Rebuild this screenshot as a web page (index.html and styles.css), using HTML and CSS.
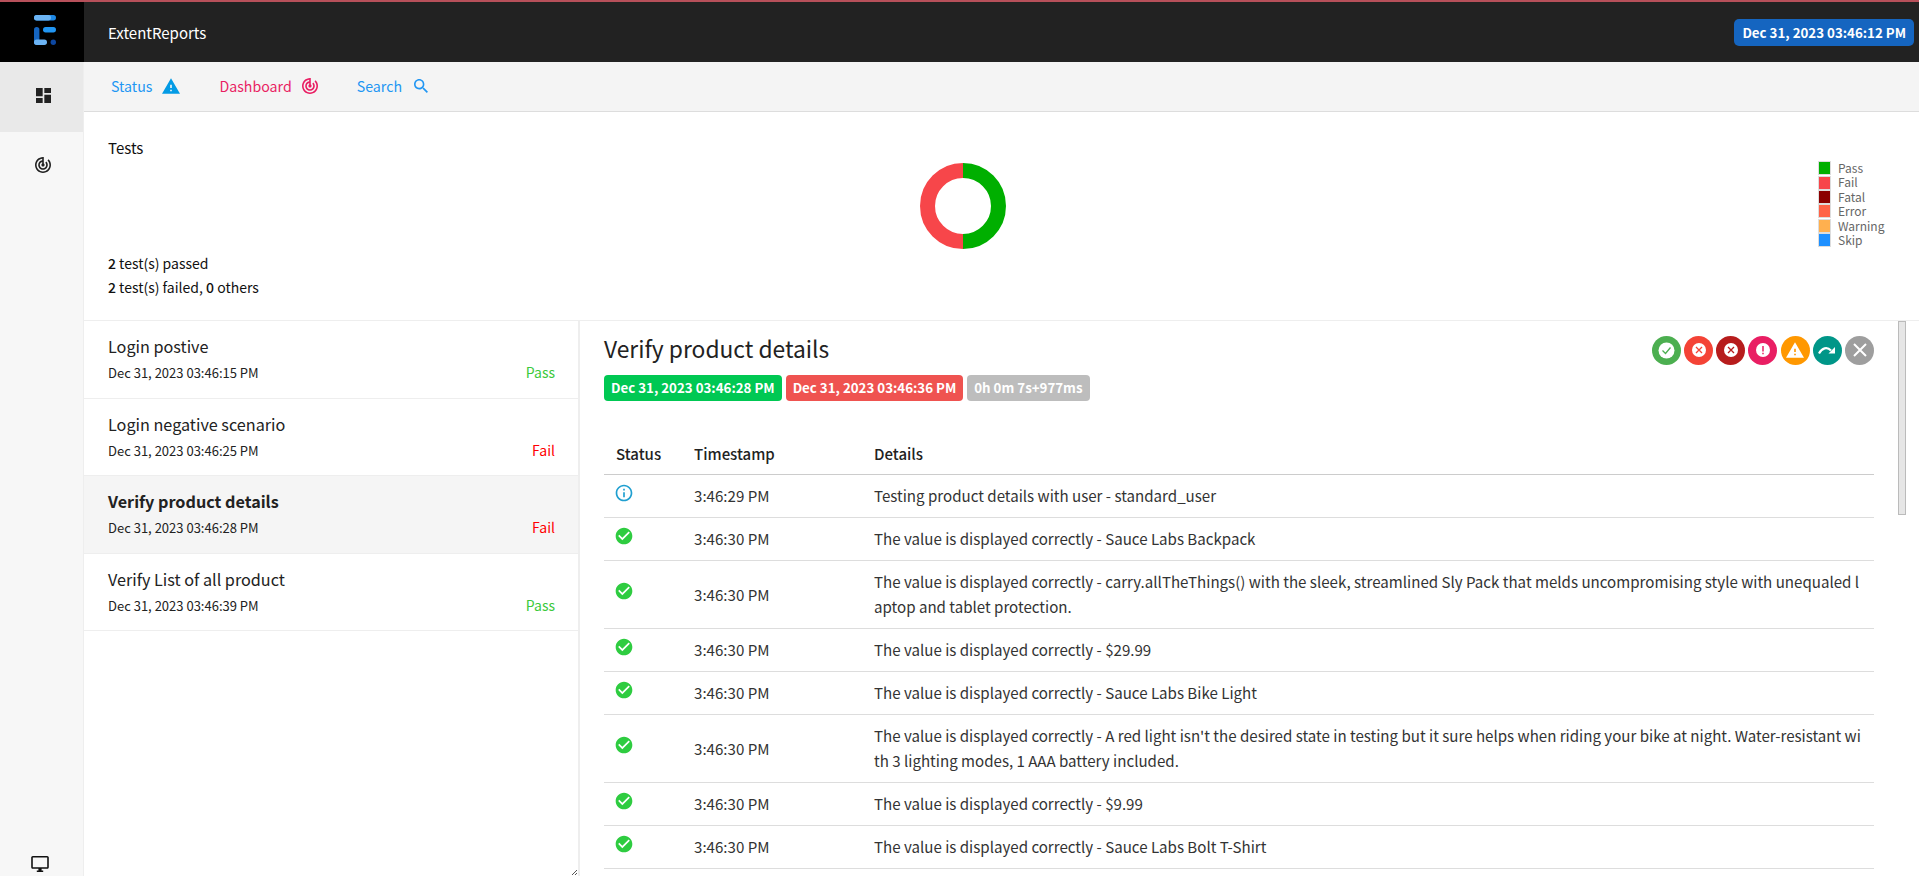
FILE: index.html
```html
<!DOCTYPE html>
<html lang="en">
<head>
  <meta charset="UTF-8">
  <title>ExtentReports</title>
  <link rel="stylesheet" href="styles.css">
</head>
<body>
  <header class="topbar">
    <div class="logo">
      <svg width="24" height="32" viewBox="0 0 24 32">
        <rect x="1" y="1" width="22" height="5.4" rx="2.7" fill="#1e88e5"/>
        <rect x="1" y="1" width="17" height="5.4" rx="2.7" fill="#6cb4f4"/>
        <rect x="10" y="13" width="13" height="5.4" rx="2.7" fill="#2196f3"/>
        <rect x="1" y="13" width="5.4" height="18" rx="2.7" fill="#1565c0"/>
        <rect x="1" y="25.6" width="13" height="5.4" rx="2.7" fill="#6cb4f4"/>
        <circle cx="20.3" cy="28.3" r="2.7" fill="#0d47a1"/>
      </svg>
    </div>
    <div class="brand">ExtentReports</div>
    <div class="started">Dec 31, 2023 03:46:12 PM</div>
  </header>

  <div class="shell">
    <aside class="sidenav">
      <a class="side-item active">
        <svg width="15" height="15" viewBox="3 3 18 18"><path d="M3 13h8V3H3v10zm0 8h8v-6H3v6zm10 0h8V11h-8v10zm0-18v6h8V3h-8z" fill="#222"/></svg>
      </a>
      <a class="side-item">
        <svg width="16" height="16" viewBox="2 2 20 20"><path d="M19.07 4.93l-1.41 1.41C19.1 7.79 20 9.79 20 12c0 4.42-3.58 8-8 8s-8-3.58-8-8c0-4.08 3.05-7.44 7-7.93v2.02C8.16 6.57 6 9.03 6 12c0 3.31 2.69 6 6 6s6-2.69 6-6c0-1.66-.67-3.16-1.76-4.24l-1.41 1.41C15.55 9.9 16 10.9 16 12c0 2.21-1.79 4-4 4s-4-1.79-4-4c0-1.86 1.28-3.41 3-3.86v2.14c-.6.35-1 .98-1 1.72 0 1.1.9 2 2 2s2-.9 2-2c0-.74-.4-1.38-1-1.72V2h-1C6.48 2 2 6.48 2 12s4.48 10 10 10 10-4.48 10-10c0-2.76-1.12-5.26-2.93-7.07z" fill="#222"/></svg>
      </a>
      <a class="side-item monitor">
        <svg width="18" height="16" viewBox="1 2 22 20"><path d="M21 2H3c-1.1 0-2 .9-2 2v12c0 1.1.9 2 2 2h7v2H8v2h8v-2h-2v-2h7c1.1 0 2-.9 2-2V4c0-1.1-.9-2-2-2zm0 14H3V4h18v12z" fill="#111"/></svg>
      </a>
    </aside>

    <div class="content">
      <nav class="subnav">
        <a class="tab tab-status">Status
          <svg width="18" height="16" viewBox="1 2 22 19"><path d="M1 21h22L12 2 1 21zm12-3h-2v-2h2v2zm0-4h-2v-4h2v4z" fill="#039be5"/></svg>
        </a>
        <a class="tab tab-dash">Dashboard
          <svg width="16" height="16" viewBox="2 2 20 20"><path d="M19.07 4.93l-1.41 1.41C19.1 7.79 20 9.79 20 12c0 4.42-3.58 8-8 8s-8-3.58-8-8c0-4.08 3.05-7.44 7-7.93v2.02C8.16 6.57 6 9.03 6 12c0 3.31 2.69 6 6 6s6-2.69 6-6c0-1.66-.67-3.16-1.76-4.24l-1.41 1.41C15.55 9.9 16 10.9 16 12c0 2.21-1.79 4-4 4s-4-1.79-4-4c0-1.86 1.28-3.41 3-3.86v2.14c-.6.35-1 .98-1 1.72 0 1.1.9 2 2 2s2-.9 2-2c0-.74-.4-1.38-1-1.72V2h-1C6.48 2 2 6.48 2 12s4.48 10 10 10 10-4.48 10-10c0-2.76-1.12-5.26-2.93-7.07z" fill="#e91e63"/></svg>
        </a>
        <a class="tab tab-search">Search
          <svg width="14" height="14" viewBox="3 3 17.5 17.5"><path d="M15.5 14h-.79l-.28-.27C15.41 12.59 16 11.11 16 9.5 16 5.91 13.09 3 9.5 3S3 5.91 3 9.5 5.91 16 9.5 16c1.61 0 3.09-.59 4.23-1.57l.27.28v.79l5 4.99L20.49 19l-4.99-5zm-6 0C7.01 14 5 11.99 5 9.5S7.01 5 9.5 5 14 7.01 14 9.5 11.99 14 9.5 14z" fill="#2196f3"/></svg>
        </a>
      </nav>

      <section class="summary">
        <div class="summary-text">
          <div class="summary-title">Tests</div>
          <div class="summary-counts">
            <div><b>2</b> test(s) passed</div>
            <div><b>2</b> test(s) failed, <b>0</b> others</div>
          </div>
        </div>
        <div class="donut">
          <svg width="86" height="86" viewBox="0 0 86 86">
            <path d="M43 7.5a35.500 35.500 0 0 1 0 71" fill="none" stroke="#00af00" stroke-width="15"/>
            <path d="M43 78.500a35.500 35.500 0 0 1 0-71" fill="none" stroke="#f7464a" stroke-width="15"/>
          </svg>
        </div>
        <ul class="legend">
          <li><i class="c-pass"></i>Pass</li>
          <li><i class="c-fail"></i>Fail</li>
          <li><i class="c-fatal"></i>Fatal</li>
          <li><i class="c-error"></i>Error</li>
          <li><i class="c-warning"></i>Warning</li>
          <li><i class="c-skip"></i>Skip</li>
        </ul>
      </section>

      <div class="split">
        <ul class="test-list">
          <li class="test">
            <div class="test-name">Login postive</div>
            <div class="test-meta"><span>Dec 31, 2023 03:46:15 PM</span><span class="pass">Pass</span></div>
          </li>
          <li class="test">
            <div class="test-name">Login negative scenario</div>
            <div class="test-meta"><span>Dec 31, 2023 03:46:25 PM</span><span class="fail">Fail</span></div>
          </li>
          <li class="test selected">
            <div class="test-name">Verify product details</div>
            <div class="test-meta"><span>Dec 31, 2023 03:46:28 PM</span><span class="fail">Fail</span></div>
          </li>
          <li class="test">
            <div class="test-name">Verify List of all product</div>
            <div class="test-meta"><span>Dec 31, 2023 03:46:39 PM</span><span class="pass">Pass</span></div>
          </li>
          <svg class="resize-mark" width="6" height="6" viewBox="0 0 6 6"><path d="M5 0L0 5M5 3L3 5" stroke="#555" stroke-width="1"/></svg>
        </ul>

        <main class="detail">
          <div class="detail-head">
            <h2>Verify product details</h2>
            <div class="filters">
              <span class="dot d-pass"><svg width="17" height="17" viewBox="0 0 17 17"><circle cx="8.500" cy="8.500" r="8" fill="#fff"/><path d="M4.500 8.500l3 3 5-6" fill="none" stroke="#4caf50" stroke-width="1.300"/></svg></span>
              <span class="dot d-fail"><svg width="14" height="14" viewBox="0 0 14 14"><circle cx="7" cy="7" r="7" fill="#fff"/><path d="M4 4l6 6M10 4l-6 6" stroke="#f44336" stroke-width="1.300"/></svg></span>
              <span class="dot d-fatal"><svg width="14" height="14" viewBox="0 0 14 14"><circle cx="7" cy="7" r="7" fill="#fff"/><path d="M4 4l6 6M10 4l-6 6" stroke="#b71c1c" stroke-width="1.300"/></svg></span>
              <span class="dot d-error"><svg width="14" height="14" viewBox="0 0 14 14"><circle cx="7" cy="7" r="7" fill="#fff"/><path d="M7 3v5.500M7 9.800v1.500" stroke="#e91e63" stroke-width="1.500"/></svg></span>
              <span class="dot d-warn"><svg width="18" height="16" viewBox="1 2 22 19"><path d="M1 21h22L12 2 1 21zm12-3h-2v-2h2v2zm0-4h-2v-4h2v4z" fill="#fff"/></svg></span>
              <span class="dot d-skip"><svg width="18" height="10" viewBox="0 0 18 10"><path d="M1 8.500C4 3 9 1.500 13 5.500" fill="none" stroke="#fff" stroke-width="2.200"/><path d="M17 8.500h-6.500L17 2z" fill="#fff"/></svg></span>
              <span class="dot d-clear"><svg width="14" height="14" viewBox="0 0 14 14"><path d="M1 1l12 12M13 1L1 13" stroke="#fff" stroke-width="2"/></svg></span>
            </div>
          </div>
          <div class="badges">
            <span class="badge b-start">Dec 31, 2023 03:46:28 PM</span>
            <span class="badge b-end">Dec 31, 2023 03:46:36 PM</span>
            <span class="badge b-time">0h 0m 7s+977ms</span>
          </div>

          <table class="log">
            <thead>
              <tr><th class="col-status">Status</th><th class="col-time">Timestamp</th><th>Details</th></tr>
            </thead>
            <tbody>
              <tr><td><svg class="ico" viewBox="0 0 24 24"><path d="M11 7h2v2h-2zm0 4h2v6h-2zm1-9C6.48 2 2 6.48 2 12s4.48 10 10 10 10-4.48 10-10S17.520 2 12 2zm0 18c-4.41 0-8-3.59-8-8s3.59-8 8-8 8 3.59 8 8-3.59 8-8 8z" fill="#1f9fd0"/></svg></td><td>3:46:29 PM</td><td>Testing product details with user - standard_user</td></tr>
              <tr><td><svg class="ico" viewBox="0 0 24 24"><use href="#ok"/></svg></td><td>3:46:30 PM</td><td>The value is displayed correctly - Sauce Labs Backpack</td></tr>
              <tr><td><svg class="ico" viewBox="0 0 24 24"><use href="#ok"/></svg></td><td>3:46:30 PM</td><td>The value is displayed correctly - carry.allTheThings() with the sleek, streamlined Sly Pack that melds uncompromising style with unequaled laptop and tablet protection.</td></tr>
              <tr><td><svg class="ico" viewBox="0 0 24 24"><use href="#ok"/></svg></td><td>3:46:30 PM</td><td>The value is displayed correctly - $29.99</td></tr>
              <tr><td><svg class="ico" viewBox="0 0 24 24"><use href="#ok"/></svg></td><td>3:46:30 PM</td><td>The value is displayed correctly - Sauce Labs Bike Light</td></tr>
              <tr><td><svg class="ico" viewBox="0 0 24 24"><use href="#ok"/></svg></td><td>3:46:30 PM</td><td>The value is displayed correctly - A red light isn't the desired state in testing but it sure helps when riding your bike at night. Water-resistant with 3 lighting modes, 1 AAA battery included.</td></tr>
              <tr><td><svg class="ico" viewBox="0 0 24 24"><use href="#ok"/></svg></td><td>3:46:30 PM</td><td>The value is displayed correctly - $9.99</td></tr>
              <tr><td><svg class="ico" viewBox="0 0 24 24"><use href="#ok"/></svg></td><td>3:46:30 PM</td><td>The value is displayed correctly - Sauce Labs Bolt T-Shirt</td></tr>
            </tbody>
          </table>
          <div class="scroll-thumb"></div>
        </main>
      </div>
    </div>
  </div>

  <svg width="0" height="0" class="defs">
    <defs>
      <path id="ok" d="M12 2C6.48 2 2 6.48 2 12s4.48 10 10 10 10-4.48 10-10S17.520 2 12 2zm-2 15l-5-5 1.410-1.410L10 14.170l7.590-7.590L19 8l-9 9z" fill="#2ecc40"/>
    </defs>
  </svg>
</body>
</html>
```

FILE: styles.css
```css
* {
  box-sizing: border-box;
}

html, body {
  height: 100%;
}

body {
  margin: 0;
  overflow: hidden;
  background: #fff;
  color: #222;
  font-family: "Noto Sans CJK SC", "Noto Sans", sans-serif;
  font-size: 15px;
}

ul {
  list-style: none;
  margin: 0;
  padding: 0;
}

.defs {
  position: absolute;
}

/* top bar */
.topbar {
  display: flex;
  align-items: center;
  height: 62px;
  background: #222;
  border-top: 2px solid #b7505a;
}

.logo {
  display: flex;
  align-items: center;
  justify-content: center;
  width: 84px;
  height: 100%;
  padding: 0 0 4px 6px;
  background: #000;
}

.brand {
  flex: 1;
  padding-left: 24px;
  color: #fff;
  font-size: 15px;
}

.started {
  margin-right: 5px;
  padding: 0 8px;
  height: 27px;
  line-height: 27px;
  border-radius: 5px;
  background: #1565c0;
  color: #fff;
  font-size: 13.3px;
  font-weight: 700;
}

.shell {
  display: flex;
  height: 814px;
}

/* left icons */
.sidenav {
  display: flex;
  flex-direction: column;
  width: 84px;
  background: #f7f7f7;
  border-right: 1px solid #eee;
}

.side-item {
  display: flex;
  align-items: center;
  justify-content: center;
  height: 70px;
  padding: 0 0 4px 3px;
}

.side-item.active {
  background: #e9e9e9;
  height: 70px;
}

.monitor {
  margin-top: auto;
  height: 28px;
  padding: 4px 4px 0 0;
}

.content {
  flex: 1;
  min-width: 0;
}

/* tabs */
.subnav {
  display: flex;
  align-items: center;
  gap: 39px;
  height: 50px;
  padding: 0 0 2px 27px;
  background: #f4f4f4;
  border-bottom: 1px solid #ddd;
  font-size: 14.2px;
}

.tab {
  display: flex;
  align-items: center;
  gap: 10px;
}

.tab-status { color: #2196f3; }
.tab-dash { color: #e91e63; }
.tab-search { color: #2196f3; gap: 12px; }

/* summary */
.summary {
  display: flex;
  height: 208px;
}

.summary-text {
  display: flex;
  flex-direction: column;
  justify-content: space-between;
  width: 836px;
  padding: 24px 0 21px 24px;
  color: #111;
  font-size: 14px;
  line-height: 24px;
}

.summary-title {
  font-size: 15px;
}

.summary-counts b {
  font-weight: 500;
}

.donut {
  width: 86px;
  margin-top: 51px;
}

.donut svg {
  display: block;
}

.legend {
  margin: 49px 0 0 812px;
  color: #666;
  font-size: 12px;
  line-height: 14.4px;
  white-space: nowrap;
}

.legend li {
  display: flex;
  align-items: center;
  gap: 7px;
}

.legend i {
  width: 13px;
  height: 14px;
  border: 1px solid #ddd;
}

.c-pass { background: #00af00; }
.c-fail { background: #f7464a; }
.c-fatal { background: #8b0000; }
.c-error { background: #ff6347; }
.c-warning { background: #ffb04f; }
.c-skip { background: #1e90ff; }

/* list + detail */
.split {
  display: flex;
  height: 556px;
  border-top: 1px solid #eee;
}

.test-list {
  position: relative;
  flex: none;
  width: 496px;
  border-right: 2px solid #eee;
}

.test {
  height: 77.5px;
  padding: 13px 23px 0 24px;
  border-bottom: 1px solid #eee;
}

.test-name {
  font-size: 16.2px;
  line-height: 24px;
  color: #222;
}

.test-meta {
  display: flex;
  justify-content: space-between;
  align-items: flex-start;
  margin-top: 5px;
  font-size: 13px;
  line-height: 20px;
}

.test-meta .pass {
  margin-top: -1px;
  color: #3cc93c;
  font-size: 14px;
}

.test-meta .fail {
  margin-top: -1px;
  color: #f00;
  font-size: 14px;
}

.selected {
  background: #f5f5f5;
}

.selected .test-name {
  font-weight: 700;
}

.resize-mark {
  position: absolute;
  right: 0;
  bottom: 0;
}

.detail {
  position: relative;
  flex: 1;
  min-width: 0;
  overflow: hidden;
  padding: 11px 45px 0 24px;
}

.detail-head {
  display: flex;
  justify-content: space-between;
  align-items: center;
}

.detail h2 {
  margin: 0;
  font-size: 22.8px;
  font-weight: 400;
  line-height: 34px;
  color: #222;
}

.filters {
  display: flex;
  gap: 3.2px;
  margin-top: 2px;
}

.dot {
  display: flex;
  align-items: center;
  justify-content: center;
  width: 29px;
  height: 29px;
  border-radius: 50%;
}

.d-pass { background: #4caf50; }
.d-fail { background: #f44336; }
.d-fatal { background: #b71c1c; }
.d-error { background: #e91e63; }
.d-warn { background: #ff9800; }
.d-skip { background: #009688; }
.d-clear { background: #9e9e9e; }

.badges {
  display: flex;
  gap: 4px;
  margin-top: 9px;
}

.badge {
  height: 26px;
  padding: 0 7px;
  line-height: 26px;
  border-radius: 4px;
  color: #fff;
  font-size: 13.3px;
  font-weight: 700;
}

.b-start { background: #00c853; }
.b-end { background: #ef5350; }
.b-time { background: #bdbdbd; }

.log {
  width: 100%;
  margin-top: 33px;
  border-collapse: collapse;
  table-layout: fixed;
}

.log th {
  height: 40px;
  padding: 0 12px;
  text-align: left;
  font-weight: 500;
  font-size: 15px;
  color: #222;
  border-bottom: 1px solid #ccc;
}

.log td {
  padding: 8.5px 12px;
  font-size: 15.1px;
  line-height: 25px;
  color: #333;
  vertical-align: middle;
  word-break: break-all;
  border-bottom: 1px solid #ddd;
}

.col-status {
  width: 78px;
}

.col-time {
  width: 180px;
}

.ico {
  display: block;
  width: 20px;
  height: 20px;
  margin: -6px 0 0 -2px;
}

.scroll-thumb {
  position: absolute;
  top: 0;
  right: 13px;
  width: 8px;
  height: 194px;
  background: #e6e6e6;
  border: 1px solid #bbb;
}
```
